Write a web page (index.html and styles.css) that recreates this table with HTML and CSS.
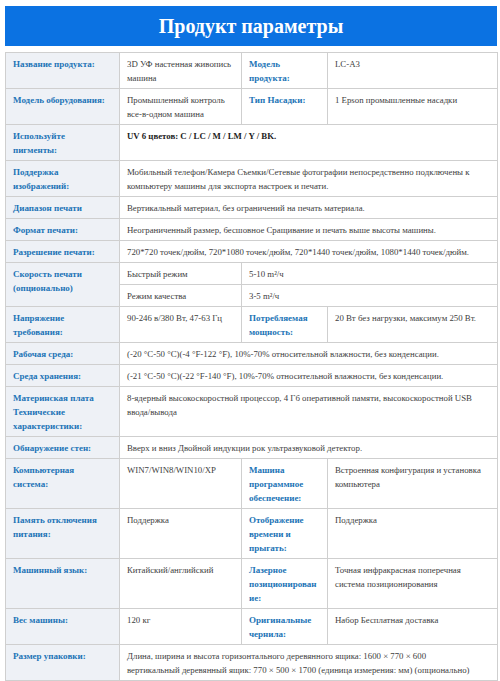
FILE: index.html
```html
<!DOCTYPE html>
<html lang="ru">
<head>
<meta charset="utf-8">
<title>Продукт параметры</title>
<link rel="stylesheet" href="styles.css">
</head>
<body>
<div class="page">
  <h1 class="banner">Продукт параметры</h1>
  <table class="spec">
    <colgroup>
      <col class="c1"><col class="c2"><col class="c3"><col class="c4">
    </colgroup>
    <tr>
      <th>Название продукта:</th>
      <td>3D УФ настенная живопись машина</td>
      <th class="sub">Модель продукта:</th>
      <td>LC-A3</td>
    </tr>
    <tr>
      <th>Модель оборудования:</th>
      <td>Промышленный контроль все-в-одном машина</td>
      <th class="sub">Тип Насадки:</th>
      <td>1 Epson промышленные насадки</td>
    </tr>
    <tr>
      <th>Используйте пигменты:</th>
      <td colspan="3" class="strong">UV 6 цветов: C / LC / M / LM / Y / BK.</td>
    </tr>
    <tr>
      <th>Поддержка изображений:</th>
      <td colspan="3">Мобильный телефон/Камера Съемки/Сетевые фотографии непосредственно подключены к компьютеру машины для экспорта настроек и печати.</td>
    </tr>
    <tr>
      <th>Диапазон печати</th>
      <td colspan="3">Вертикальный материал, без ограничений на печать материала.</td>
    </tr>
    <tr>
      <th>Формат печати:</th>
      <td colspan="3">Неограниченный размер, бесшовное Сращивание и печать выше высоты машины.</td>
    </tr>
    <tr>
      <th>Разрешение печати:</th>
      <td colspan="3">720*720 точек/дюйм, 720*1080 точек/дюйм, 720*1440 точек/дюйм, 1080*1440 точек/дюйм.</td>
    </tr>
    <tr>
      <th rowspan="2">Скорость печати (опционально)</th>
      <td>Быстрый режим</td>
      <td colspan="2">5-10 m²/ч</td>
    </tr>
    <tr>
      <td>Режим качества</td>
      <td colspan="2">3-5 m²/ч</td>
    </tr>
    <tr>
      <th>Напряжение требования:</th>
      <td>90-246 в/380 Вт, 47-63 Гц</td>
      <th class="sub">Потребляемая мощность:</th>
      <td>20 Вт без нагрузки, максимум 250 Вт.</td>
    </tr>
    <tr>
      <th>Рабочая среда:</th>
      <td colspan="3">(-20 °C-50 °C)(-4 °F-122 °F), 10%-70% относительной влажности, без конденсации.</td>
    </tr>
    <tr>
      <th>Среда хранения:</th>
      <td colspan="3">(-21 °C-50 °C)(-22 °F-140 °F), 10%-70% относительной влажности, без конденсации.</td>
    </tr>
    <tr>
      <th>Материнская плата Технические характеристики:</th>
      <td colspan="3">8-ядерный высокоскоростной процессор, 4 Гб оперативной памяти, высокоскоростной USB <span class="nw">ввода/вывода</span></td>
    </tr>
    <tr>
      <th>Обнаружение стен:</th>
      <td colspan="3">Вверх и вниз Двойной индукции рок ультразвуковой детектор.</td>
    </tr>
    <tr>
      <th>Компьютерная система:</th>
      <td>WIN7/WIN8/WIN10/XP</td>
      <th class="sub">Машина программное обеспечение:</th>
      <td>Встроенная конфигурация и установка компьютера</td>
    </tr>
    <tr>
      <th>Память отключения питания:</th>
      <td>Поддержка</td>
      <th class="sub">Отображение времени и прыгать:</th>
      <td>Поддержка</td>
    </tr>
    <tr>
      <th>Машинный язык:</th>
      <td>Китайский/английский</td>
      <th class="sub">Лазерное позиционирован ие:</th>
      <td>Точная инфракрасная поперечная система позиционирования</td>
    </tr>
    <tr>
      <th>Вес машины:</th>
      <td>120 кг</td>
      <th class="sub">Оригинальные чернила:</th>
      <td>Набор Бесплатная доставка</td>
    </tr>
    <tr>
      <th>Размер упаковки:</th>
      <td colspan="3">Длина, ширина и высота горизонтального деревянного ящика: 1600 × 770 × 600<br>вертикальный деревянный ящик: 770 × 500 × 1700 (единица измерения: мм) (опционально)</td>
    </tr>
  </table>
</div>
</body>
</html>
```
FILE: styles.css
```css
html, body {
  margin: 0;
  padding: 0;
  background: #ffffff;
}

.page {
  width: 492px;
  margin: 6px 0 0 5px;
  font-family: "Liberation Serif", "Times New Roman", serif;
}

.banner {
  margin: 0;
  height: 40px;
  background: #0b72e2;
  color: #ffffff;
  font-size: 20px;
  font-weight: bold;
  line-height: 40px;
  text-align: center;
}

.spec {
  margin-top: 6px;
  width: 492px;
  border-collapse: collapse;
  table-layout: fixed;
  font-size: 8.8px;
  line-height: 14px;
}

.c1 { width: 114px; }
.c2 { width: 122px; }
.c3 { width: 86px; }
.c4 { width: 170px; }

.spec th,
.spec td {
  border: 1px solid #cfcfcf;
  padding: 4px 5px 3px 7px;
  vertical-align: top;
  text-align: left;
}

.spec th {
  background: #eef1f6;
  color: #2274b6;
  font-weight: bold;
  font-size: 9px;
  padding-right: 13px;
}

.spec th.sub {
  background: #ffffff;
}

.spec td {
  color: #404040;
  font-weight: normal;
}

.spec td.strong {
  font-weight: bold;
  color: #222222;
}

.nw {
  white-space: nowrap;
}
```
